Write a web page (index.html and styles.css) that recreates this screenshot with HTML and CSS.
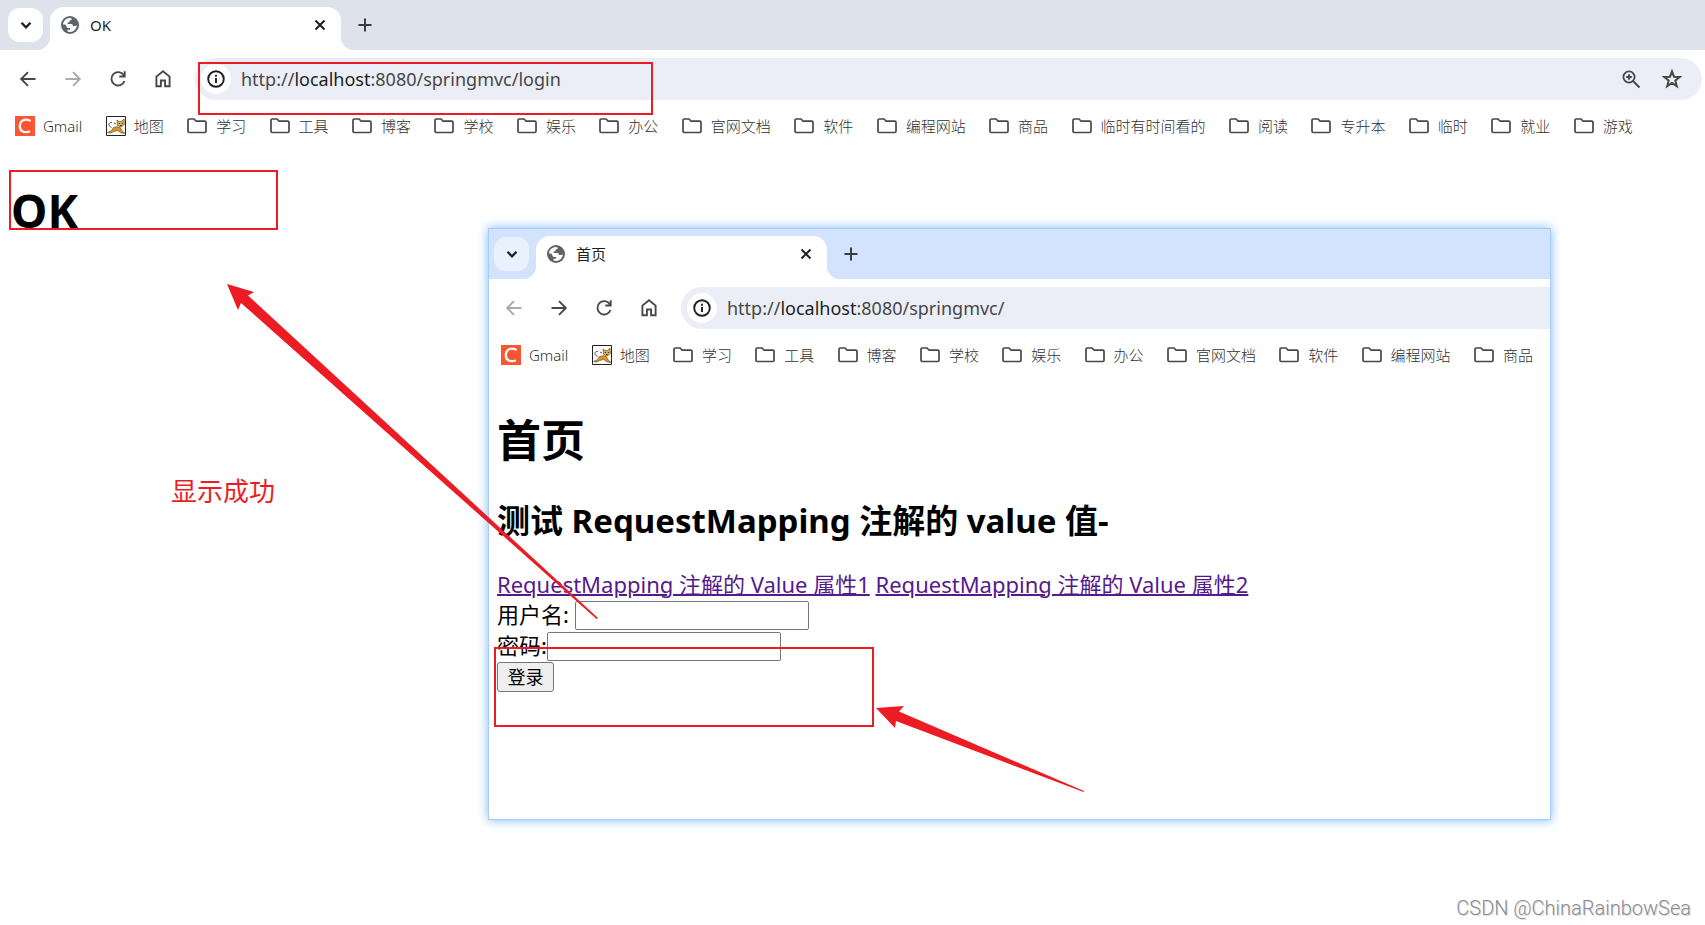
FILE: index.html
```html
<!DOCTYPE html>
<html lang="zh-CN">
<head>
<meta charset="utf-8">
<title>OK</title>
<link rel="stylesheet" href="styles.css">
</head>
<body>
<svg class="sprite" aria-hidden="true">
  <symbol id="chevron" viewBox="0 0 20 20"><path d="M5.500 7.800l4.500 4.500 4.500-4.500" fill="none" stroke="currentColor" stroke-width="2.300"/></symbol>
  <symbol id="globe" viewBox="0 0 18 18"><circle cx="9" cy="9" r="9" fill="#5f6368"/><path d="M2 8.600C2.300 5.200 4.800 2.500 8.300 2.100L10.800 2.600C10.800 4 10 4.500 8.600 4.600L8.400 6.200L6.500 6.600L6.600 8H10.400C11.700 8 11.900 9.100 11.900 10H14C14.800 10 15.400 9.700 15.900 9.200C15.700 12.800 12.700 15.900 9 15.900L6.500 15.400V13.800H8.400C9.200 13.800 9.200 12.800 9.200 11.900H7.300C6 11.900 5.500 11.200 5.500 10.300L4.200 8.600Z" fill="#fff"/></symbol>
  <symbol id="close" viewBox="0 0 12 12"><path d="M1.500 1.500l9 9M10.500 1.500l-9 9" stroke="currentColor" stroke-width="2"/></symbol>
  <symbol id="plus" viewBox="0 0 14 14"><path d="M7 .5v13M.5 7h13" stroke="currentColor" stroke-width="2"/></symbol>
  <symbol id="back" viewBox="0 0 20 20"><path d="M17.500 10H4M10 3.200L3.200 10l6.800 6.800" fill="none" stroke="currentColor" stroke-width="1.900"/></symbol>
  <symbol id="forward" viewBox="0 0 20 20"><path d="M2.500 10H16M10 3.200l6.800 6.800-6.800 6.800" fill="none" stroke="currentColor" stroke-width="1.900"/></symbol>
  <symbol id="reload" viewBox="0 0 20 20"><path d="M15.800 6.200A6.700 6.700 0 1 0 16.500 12M16.700 2.300v5.200h-5.400" fill="none" stroke="currentColor" stroke-width="1.900"/></symbol>
  <symbol id="home" viewBox="0 0 20 20"><path d="M3.400 17.200V7.600L10 2.300l6.600 5.300v9.600h-4.500v-5.700H7.900v5.700z" fill="none" stroke="currentColor" stroke-width="1.900"/></symbol>
  <symbol id="info" viewBox="0 0 18 18"><circle cx="9" cy="9" r="7.800" fill="none" stroke="currentColor" stroke-width="1.900"/><path d="M9 8v5M9 4.800v1.900" stroke="currentColor" stroke-width="1.900"/></symbol>
  <symbol id="zoom" viewBox="0 0 20 20"><circle cx="8" cy="8" r="5.600" fill="none" stroke="currentColor" stroke-width="1.800"/><path d="M12 12l6.500 6.500M8 5.200v5.600M5.200 8h5.600" stroke="currentColor" stroke-width="1.900"/></symbol>
  <symbol id="star" viewBox="0 0 20 20"><path d="M10 2.300l2 5.400 5.700.3-4.400 3.600 1.500 5.600-4.800-3.200-4.800 3.200 1.500-5.600L2.300 8l5.700-.3z" fill="none" stroke="currentColor" stroke-width="2"/></symbol>
  <symbol id="folder" viewBox="0 0 20 16"><path d="M2.200 1h4.900l2 2.200h8.700a1.200 1.200 0 0 1 1.200 1.200v8.900a1.200 1.200 0 0 1-1.200 1.200H2.200A1.200 1.200 0 0 1 1 13.300V2.200A1.200 1.200 0 0 1 2.200 1z" fill="none" stroke="currentColor" stroke-width="1.700"/></symbol>
  <symbol id="csdn" viewBox="0 0 20 20"><path d="M0 0h20v20H0z" fill="#fc5531"/><path d="M15.600 5C10 1.700 4.800 4.500 4.800 10.200c0 5.200 4.600 7.300 10.200 5" fill="none" stroke="#fff" stroke-width="2.300"/></symbol>
  <symbol id="tomcat" viewBox="0 0 20 20"><path d="M.5.500h19v19H.5z" fill="#fff" stroke="#222"/><path d="M6 6.500C3.500 6 2 8 3.500 10l2 1.500M8 7l2 1" fill="none" stroke="#444" stroke-width=".9"/><path d="M1.500 16.500l4-1.800 2-3.200 4-.8 3 1.300 2 3.500 2.500 1.800-3.500-.3-4-2.500-4 1-2.500 1.500z" fill="#d9982c" stroke="#6b4c1c" stroke-width=".7"/><path d="M11 4l2 1.500h2.500L18 3l.3 5.500L15 11.200l-3.500-2z" fill="#e0b04c" stroke="#6b4c1c" stroke-width=".7"/><path d="M12.800 7.500h1M15.800 7.500h1M14 9.500h1.500" stroke="#222"/></symbol>
</svg>

<div class="browser">
  <div class="tabs">
    <button class="tab-list" aria-label="搜索标签页"><svg class="i20"><use href="#chevron"/></svg></button>
    <div class="tab"><svg class="i18"><use href="#globe"/></svg><span class="tab-title">OK</span><button class="tab-close" aria-label="关闭"><svg class="i12"><use href="#close"/></svg></button></div>
    <button class="new-tab" aria-label="新标签页"><svg class="i14"><use href="#plus"/></svg></button>
  </div>
  <div class="toolbar">
    <button class="nav" aria-label="后退"><svg class="i20"><use href="#back"/></svg></button>
    <button class="nav" aria-label="前进" disabled><svg class="i20"><use href="#forward"/></svg></button>
    <button class="nav" aria-label="刷新"><svg class="i20"><use href="#reload"/></svg></button>
    <button class="nav" aria-label="主页"><svg class="i20"><use href="#home"/></svg></button>
    <div class="address">
      <button class="site-info" aria-label="网站信息"><svg class="i18"><use href="#info"/></svg></button>
      <div class="url" role="textbox" contenteditable="true" spellcheck="false" aria-label="地址">http://<b>localhost</b>:8080/springmvc/login</div>
      <button class="action" aria-label="缩放"><svg class="i20"><use href="#zoom"/></svg></button>
      <button class="action" aria-label="收藏"><svg class="i20"><use href="#star"/></svg></button>
    </div>
  </div>
  <nav class="bookmarks" aria-label="书签">
    <a href="#"><svg class="i20"><use href="#csdn"/></svg>Gmail</a>
    <a href="#"><svg class="i20"><use href="#tomcat"/></svg>地图</a>
    <a class="dir" href="#"><svg class="fold"><use href="#folder"/></svg>学习</a>
    <a class="dir" href="#"><svg class="fold"><use href="#folder"/></svg>工具</a>
    <a class="dir" href="#"><svg class="fold"><use href="#folder"/></svg>博客</a>
    <a class="dir" href="#"><svg class="fold"><use href="#folder"/></svg>学校</a>
    <a class="dir" href="#"><svg class="fold"><use href="#folder"/></svg>娱乐</a>
    <a class="dir" href="#"><svg class="fold"><use href="#folder"/></svg>办公</a>
    <a class="dir" href="#"><svg class="fold"><use href="#folder"/></svg>官网文档</a>
    <a class="dir" href="#"><svg class="fold"><use href="#folder"/></svg>软件</a>
    <a class="dir" href="#"><svg class="fold"><use href="#folder"/></svg>编程网站</a>
    <a class="dir" href="#"><svg class="fold"><use href="#folder"/></svg>商品</a>
    <a class="dir" href="#"><svg class="fold"><use href="#folder"/></svg>临时有时间看的</a>
    <a class="dir" href="#"><svg class="fold"><use href="#folder"/></svg>阅读</a>
    <a class="dir" href="#"><svg class="fold"><use href="#folder"/></svg>专升本</a>
    <a class="dir" href="#"><svg class="fold"><use href="#folder"/></svg>临时</a>
    <a class="dir" href="#"><svg class="fold"><use href="#folder"/></svg>就业</a>
    <a class="dir" href="#"><svg class="fold"><use href="#folder"/></svg>游戏</a>
  </nav>
  <main class="result"><h1>OK</h1></main>
</div>

<div class="browser popup">
  <div class="tabs">
    <button class="tab-list" aria-label="搜索标签页"><svg class="i20"><use href="#chevron"/></svg></button>
    <div class="tab"><svg class="i18"><use href="#globe"/></svg><span class="tab-title">首页</span><button class="tab-close" aria-label="关闭"><svg class="i12"><use href="#close"/></svg></button></div>
    <button class="new-tab" aria-label="新标签页"><svg class="i14"><use href="#plus"/></svg></button>
  </div>
  <div class="toolbar">
    <button class="nav" aria-label="后退" disabled><svg class="i20"><use href="#back"/></svg></button>
    <button class="nav" aria-label="前进"><svg class="i20"><use href="#forward"/></svg></button>
    <button class="nav" aria-label="刷新"><svg class="i20"><use href="#reload"/></svg></button>
    <button class="nav" aria-label="主页"><svg class="i20"><use href="#home"/></svg></button>
    <div class="address">
      <button class="site-info" aria-label="网站信息"><svg class="i18"><use href="#info"/></svg></button>
      <div class="url" role="textbox" contenteditable="true" spellcheck="false" aria-label="地址">http://<b>localhost</b>:8080/springmvc/</div>
    </div>
  </div>
  <nav class="bookmarks" aria-label="书签">
    <a href="#"><svg class="i20"><use href="#csdn"/></svg>Gmail</a>
    <a href="#"><svg class="i20"><use href="#tomcat"/></svg>地图</a>
    <a class="dir" href="#"><svg class="fold"><use href="#folder"/></svg>学习</a>
    <a class="dir" href="#"><svg class="fold"><use href="#folder"/></svg>工具</a>
    <a class="dir" href="#"><svg class="fold"><use href="#folder"/></svg>博客</a>
    <a class="dir" href="#"><svg class="fold"><use href="#folder"/></svg>学校</a>
    <a class="dir" href="#"><svg class="fold"><use href="#folder"/></svg>娱乐</a>
    <a class="dir" href="#"><svg class="fold"><use href="#folder"/></svg>办公</a>
    <a class="dir" href="#"><svg class="fold"><use href="#folder"/></svg>官网文档</a>
    <a class="dir" href="#"><svg class="fold"><use href="#folder"/></svg>软件</a>
    <a class="dir" href="#"><svg class="fold"><use href="#folder"/></svg>编程网站</a>
    <a class="dir" href="#"><svg class="fold"><use href="#folder"/></svg>商品</a>
  </nav>
  <main class="home">
    <h1>首页</h1>
    <h2>测试 RequestMapping 注解的 value 值-</h2>
    <p class="links"><a href="#">RequestMapping 注解的 Value 属性1</a> <a href="#">RequestMapping 注解的 Value 属性2</a></p>
    <form>
      <div class="field spaced"><label for="user">用户名:</label><input id="user" type="text"></div>
      <div class="field"><label for="pass">密码:</label><input id="pass" type="password"></div>
      <button class="submit" type="button">登录</button>
    </form>
  </main>
</div>

<div class="mark mark-url"></div>
<div class="mark mark-result"></div>
<div class="mark mark-login"></div>
<svg class="arrows" aria-hidden="true"><path d="M227 284l27 8-6 3.500L598 618l-1.500 1L241 303l-3 7zM876 708l28-2-5 5.500L1084 791l-.5 1L896 721l-1 7z" fill="#ed1c24"/></svg>
<p class="note">显示成功</p>
<p class="watermark">CSDN @ChinaRainbowSea</p>
</body>
</html>
```
FILE: styles.css
```css
* { box-sizing: border-box; }
body {
  margin: 0;
  min-height: 100vh;
  position: relative;
  overflow: hidden;
  background: #fff;
  color: #000;
  font-family: "Noto Sans", "Noto Sans CJK SC", sans-serif;
}
h1, h2, p { margin: 0; }
button { font: inherit; color: inherit; border: 0; padding: 0; background: none; display: flex; align-items: center; justify-content: center; }
svg { flex: none; display: block; }
.sprite { position: absolute; width: 0; height: 0; }
.i12 { width: 12px; height: 12px; }
.i14 { width: 14px; height: 14px; }
.i18 { width: 18px; height: 18px; }
.i20 { width: 20px; height: 20px; }
.fold { width: 20px; height: 16px; }

.browser { --inset: 8px; --strip: #dee2ea; --list: #fff; background: #fff; }
.popup {
  --inset: 5px; --strip: #d3e3fd; --list: #e9f1fe;
  position: absolute;
  left: 489px;
  top: 229px;
  width: 1061px;
  height: 590px;
  overflow: hidden;
  box-shadow: 0 0 0 1px #a6ccf8, 0 0 10px 1px #7ab8f8;
}

.tabs {
  display: flex;
  height: 50px;
  padding: 7px 0 0 var(--inset);
  background: var(--strip);
}
.tab-list { width: 35px; height: 34px; margin: 1px 7px 0 0; border-radius: 12px; background: var(--list); color: #1f1f1f; }
.tab {
  position: relative;
  display: flex;
  align-items: center;
  width: 291px;
  padding: 0 15px 8px 11px;
  border-radius: 14px 14px 0 0;
  background: #fff;
  font-size: 15px;
  color: #1f1f1f;
}
.tab::before, .tab::after { content: ""; position: absolute; bottom: 0; width: 14px; height: 14px; }
.tab::before { right: 100%; background: radial-gradient(circle at 0 0, transparent 14px, #fff 15px); }
.tab::after { left: 100%; background: radial-gradient(circle at 100% 0, transparent 14px, #fff 15px); }
.tab-title { flex: 1; padding-left: 11px; }
.new-tab { width: 34px; height: 36px; margin-left: 7px; color: #3c3c3c; }

.toolbar { display: flex; align-items: center; padding: 8px 3px 0 calc(var(--inset) - 3px); background: #fff; }
.nav { width: 45px; height: 42px; color: #474747; }
.nav:disabled { color: #ababab; }
.address {
  display: flex;
  align-items: center;
  flex: 1;
  height: 42px;
  margin-left: 10px;
  padding: 0 10px 0 6px;
  border-radius: 21px;
  background: #ebeef7;
}
.popup .toolbar { padding-right: 0; }
.popup .address { border-radius: 21px 0 0 21px; }
.site-info { width: 30px; height: 30px; border-radius: 15px; background: #fff; color: #1f1f1f; }
.url { flex: 1; padding-left: 10px; font-size: 18px; color: #474747; white-space: nowrap; }
.url b { font-weight: 400; color: #1f1f1f; }
.action { width: 41px; height: 41px; color: #474747; }

.bookmarks {
  display: flex;
  align-items: center;
  justify-content: space-between;
  height: 52px;
  padding: 0 72px 0 calc(var(--inset) + 7px);
  font-size: 15px;
  font-weight: 300;
  line-height: 20px;
  white-space: nowrap;
}
.popup .bookmarks { padding-right: 17px; }
.bookmarks a { display: flex; align-items: center; gap: 8px; color: #303030; text-decoration: none; }
.bookmarks .dir { gap: 9px; }
.bookmarks svg { color: #474747; }

.result { padding: 28px 11px; }
.result h1 { font-size: 46px; line-height: 60px; }

.home { padding: 29px 8px 0; font-size: 22px; line-height: 31px; }
.home h1 { font-size: 44px; line-height: 60px; }
.home h2 { margin: 29px 0 26px; font-size: 33px; line-height: 44px; }
.links { white-space: nowrap; }
.links a { color: #551a8b; text-decoration-thickness: 2px; }
.field { display: flex; align-items: center; height: 31px; }
.field label { line-height: 28px; padding-bottom: 3px; }
.spaced { gap: 6px; }
.field input { width: 234px; height: 29px; border: 1px solid #767676; border-radius: 2px; font-size: 18px; background: #fff; }
.submit { width: 57px; height: 30px; border: 1px solid #767676; border-radius: 3px; background: #efefef; font-size: 18px; }

.mark { position: absolute; border: 2px solid #ed1c24; pointer-events: none; }
.mark-url { left: 198px; top: 62px; width: 455px; height: 53px; }
.mark-result { left: 9px; top: 170px; width: 269px; height: 60px; }
.mark-login { left: 494px; top: 647px; width: 380px; height: 80px; }
.arrows { position: absolute; left: 0; top: 0; width: 100%; height: 100%; pointer-events: none; }
.note { position: absolute; left: 171px; top: 471px; font-size: 26px; line-height: 40px; color: #ed1c24; }
.watermark { position: absolute; right: 14px; bottom: 4px; font: 300 20px/26px Roboto, sans-serif; color: #8c8c8c; text-shadow: 1px 1px 0 #ddd; }
```
